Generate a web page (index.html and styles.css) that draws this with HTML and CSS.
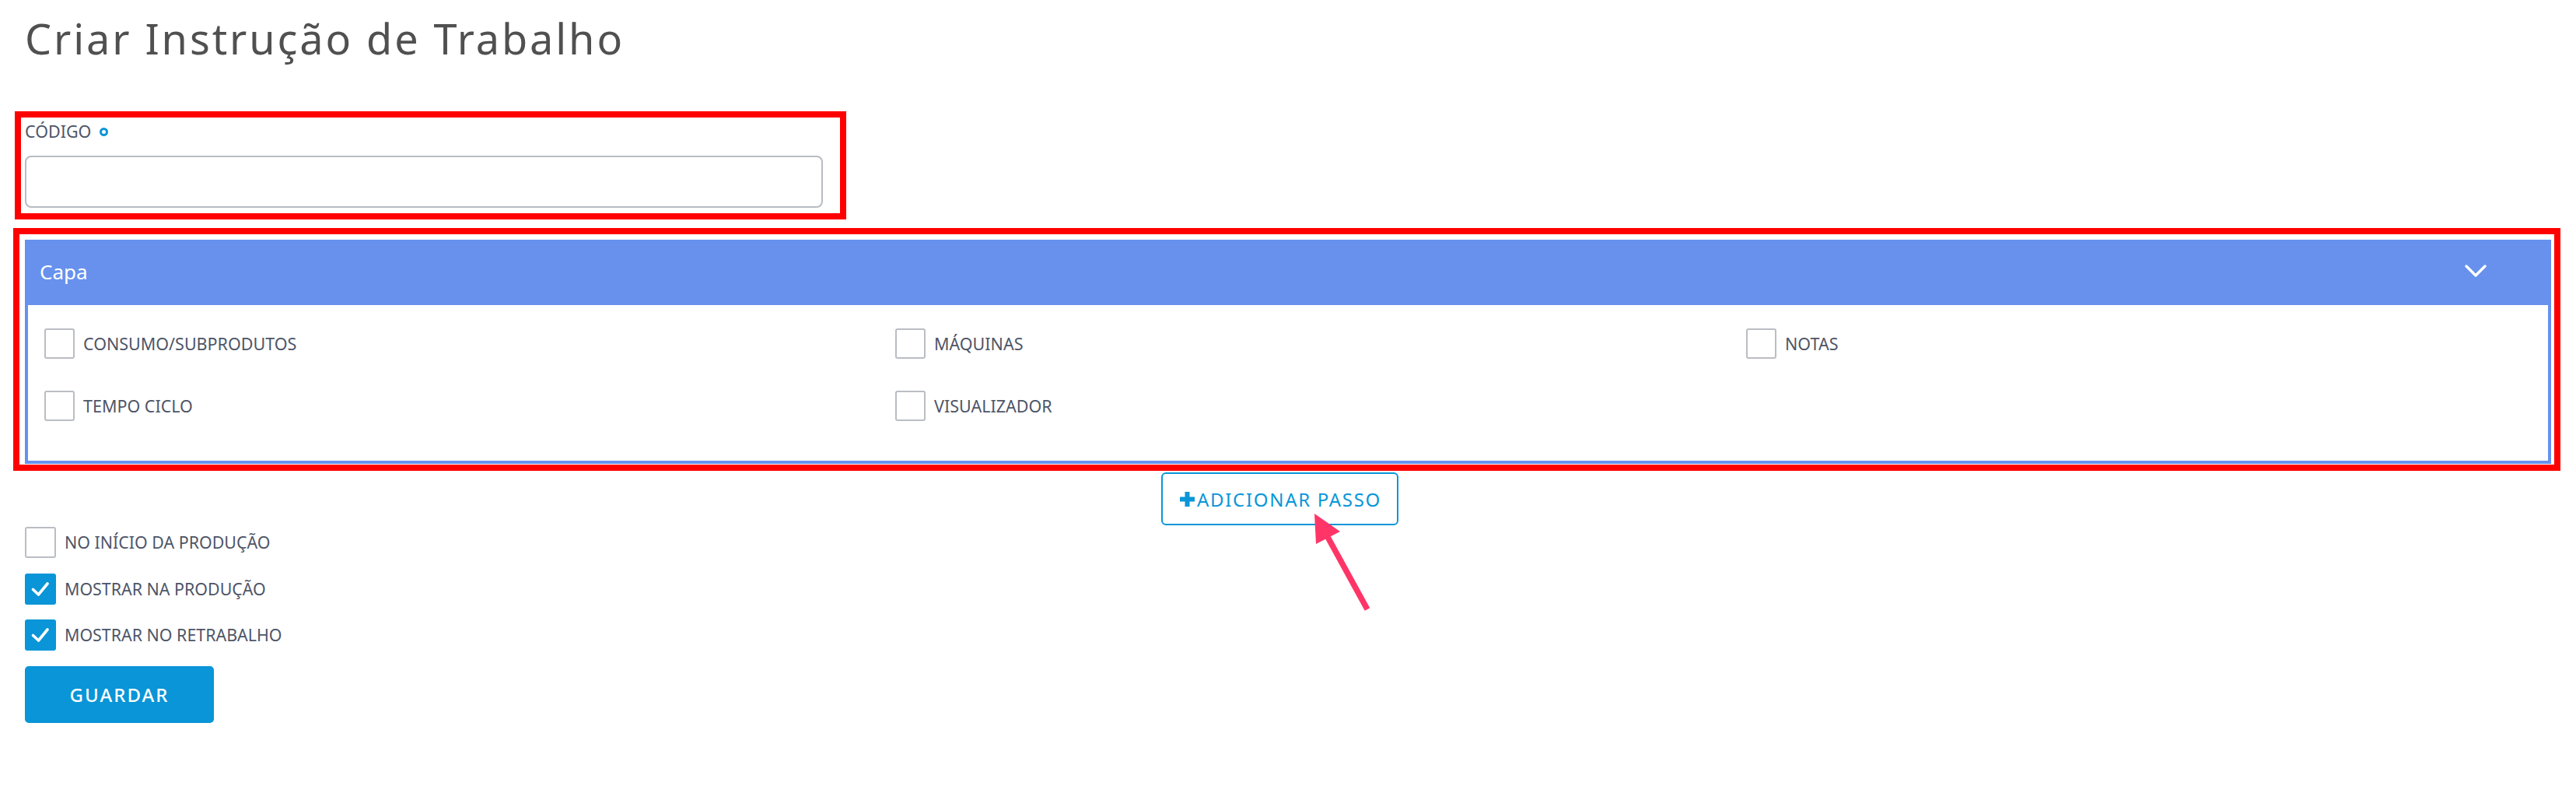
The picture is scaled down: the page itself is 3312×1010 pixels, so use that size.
FILE: index.html
```html
<!DOCTYPE html>
<html lang="pt">
<head>
<meta charset="utf-8">
<title>Criar Instrução de Trabalho</title>
<link rel="stylesheet" href="styles.css">
</head>
<body>
<main class="page">
  <h1 class="page-title">Criar Instrução de Trabalho</h1>

  <section class="mark mark-code">
    <label class="field-label">CÓDIGO <span class="req-dot"></span></label>
    <div class="text-input"></div>
  </section>

  <section class="mark mark-panel">
    <div class="panel">
      <div class="panel-head">
        <span class="panel-title">Capa</span>
        <svg class="chevron" width="28" height="17" viewBox="0 0 28 17"><path d="M2 2 L14 14 L26 2" fill="none" stroke="#fff" stroke-width="3.4" stroke-linecap="round" stroke-linejoin="round"/></svg>
      </div>
      <div class="panel-body">
        <div class="opt"><span class="box"></span><span class="opt-text">CONSUMO/SUBPRODUTOS</span></div>
        <div class="opt"><span class="box"></span><span class="opt-text">MÁQUINAS</span></div>
        <div class="opt"><span class="box"></span><span class="opt-text">NOTAS</span></div>
        <div class="opt"><span class="box"></span><span class="opt-text">TEMPO CICLO</span></div>
        <div class="opt"><span class="box"></span><span class="opt-text">VISUALIZADOR</span></div>
      </div>
    </div>
  </section>

  <div class="add-row">
    <button class="btn-add"><svg class="plus" width="19" height="19" viewBox="0 0 19 19"><path d="M6.5 0h6v6.5H19v6h-6.5V19h-6v-6.5H0v-6h6.5z" fill="#0a96d8"/></svg>ADICIONAR PASSO</button>
  </div>

  <div class="flags">
    <div class="flag"><span class="fbox"></span><span class="flag-text">NO INÍCIO DA PRODUÇÃO</span></div>
    <div class="flag"><span class="fbox checked"><svg width="40" height="40" viewBox="0 0 40 40"><path d="M10.5 20.5 L17.5 27 L29 13" fill="none" stroke="#fff" stroke-width="3.6" stroke-linecap="round" stroke-linejoin="round"/></svg></span><span class="flag-text">MOSTRAR NA PRODUÇÃO</span></div>
    <div class="flag"><span class="fbox checked"><svg width="40" height="40" viewBox="0 0 40 40"><path d="M10.5 20.5 L17.5 27 L29 13" fill="none" stroke="#fff" stroke-width="3.6" stroke-linecap="round" stroke-linejoin="round"/></svg></span><span class="flag-text">MOSTRAR NO RETRABALHO</span></div>
  </div>

  <button class="btn-save">GUARDAR</button>

  <svg class="arrow" width="110" height="145" viewBox="0 0 110 145">
    <line x1="37" y1="40" x2="88" y2="133" stroke="#ff3568" stroke-width="7.5"/>
    <polygon points="20,10 53,33 22,49" fill="#ff3568"/>
  </svg>
</main>
</body>
</html>
```

FILE: styles.css
```css
* { box-sizing: border-box; }
html, body { margin: 0; padding: 0; background: #fff; }
body { font-family: "Noto Sans", "Open Sans", sans-serif; color: #4e5567; }

.page { position: relative; padding-left: 32px; min-height: 1010px; }

.page-title {
  margin: 0;
  padding-top: 12px;
  height: 86px;
  line-height: 74px;
  font-size: 54px;
  font-weight: 400;
  letter-spacing: 2.9px;
  color: #505050;
}

.mark { border: 8px solid #ff0000; }

.mark-code {
  margin: 57px 0 0 -13px;
  width: 1069px;
  padding: 3px 22px 7px 5px;
}

.field-label {
  display: flex;
  align-items: center;
  gap: 11px;
  height: 30px;
  font-size: 21.5px;
  line-height: 30px;
  color: #4d5668;
}
.req-dot {
  width: 11px; height: 11px;
  border-radius: 50%;
  border: 3.5px solid #0a96d8;
  margin-top: 1px;
}
.text-input {
  margin-top: 16px;
  height: 67px;
  border: 2px solid #b8bcc2;
  border-radius: 8px;
  background: #fff;
}

.mark-panel {
  margin: 11px 0 0 -15px;
  width: 3275px;
  padding: 7px 4px 1px 7px;
}

.panel { display: flex; flex-direction: column; }
.panel-head {
  height: 84px;
  background: #6791ed;
  display: flex;
  align-items: center;
  justify-content: space-between;
  padding: 0 83px 0 19px;
}
.panel-title { color: #fff; font-size: 26px; line-height: 30px; margin-top: -3px; }
.chevron { margin-top: -4px; }

.panel-body {
  border: 4px solid #6791ed;
  border-top: 0;
  padding: 30px 0 51px 21px;
  display: grid;
  grid-template-columns: 1094px 1094px 1fr;
  row-gap: 41px;
}
.opt { display: flex; align-items: center; gap: 11px; height: 39px; }
.box {
  width: 39px; height: 39px;
  border: 2px solid #babdc3;
  border-radius: 3px;
  flex: none;
}
.opt-text { font-size: 21.5px; line-height: 30px; color: #4e5567; }

.add-row { margin-top: 2px; padding-left: 1461px; }
.btn-add {
  display: flex;
  align-items: center;
  width: 305px;
  height: 68px;
  padding: 0 0 0 22px;
  background: #fff;
  border: 2px solid #0a96d8;
  border-radius: 6px;
  color: #0a96d8;
  font-family: "Noto Sans", sans-serif;
  font-size: 24px;
  letter-spacing: 1.7px;
  cursor: pointer;
}
.plus { margin-right: 3px; flex: none; }

.flags { margin-top: 2px; display: flex; flex-direction: column; gap: 19.5px; }
.flag { display: flex; align-items: center; gap: 11px; height: 40px; }
.fbox {
  width: 40px; height: 40px;
  border: 2px solid #babdc3;
  border-radius: 3px;
  flex: none;
  display: block;
}
.fbox.checked { border: 0; background: #0995d7; }
.fbox svg { display: block; }
.flag-text { font-size: 21.4px; line-height: 30px; color: #4e5567; }

.btn-save {
  display: block;
  margin-top: 20px;
  width: 243px;
  height: 73px;
  border: 0;
  border-radius: 5px;
  background: #0995d7;
  color: #fff;
  font-family: "Noto Sans", sans-serif;
  font-size: 24px;
  font-weight: 500;
  letter-spacing: 2px;
  cursor: pointer;
}

.arrow { position: absolute; left: 1670px; top: 650px; }
```
